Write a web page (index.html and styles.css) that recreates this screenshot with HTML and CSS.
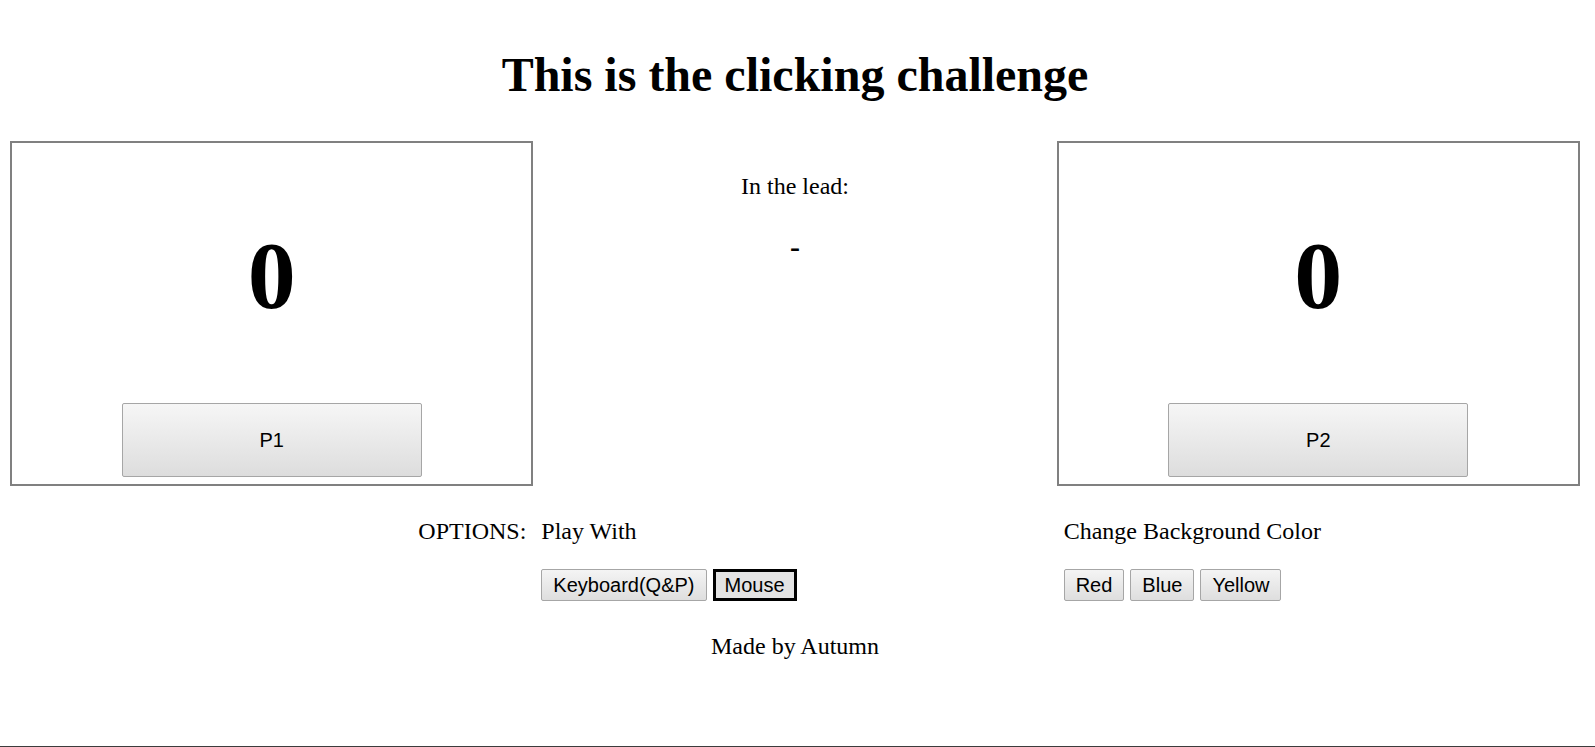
FILE: index.html
```html
<!DOCTYPE html>
<html lang="en">
<head>
<meta charset="utf-8">
<title>Clicking challenge</title>
<link rel="stylesheet" href="styles.css">
</head>
<body>
  <h1 class="title">This is the clicking challenge</h1>
  <div class="board">
    <div class="player">
      <div class="score">0</div>
      <button class="player-btn">P1</button>
    </div>
    <div class="lead">
      <div class="lead-label">In the lead:</div>
      <div class="lead-value">-</div>
    </div>
    <div class="player">
      <div class="score">0</div>
      <button class="player-btn">P2</button>
    </div>
  </div>
  <div class="options">
    <div class="opt-label">OPTIONS:</div>
    <div class="opt-group">
      <div class="opt-title">Play With</div>
      <div class="btn-row">
        <button class="small-btn">Keyboard(Q&amp;P)</button>
        <button class="small-btn selected">Mouse</button>
      </div>
    </div>
    <div class="opt-group">
      <div class="opt-title">Change Background Color</div>
      <div class="btn-row">
        <button class="small-btn">Red</button>
        <button class="small-btn">Blue</button>
        <button class="small-btn">Yellow</button>
      </div>
    </div>
  </div>
  <p class="credit">Made by Autumn</p>
</body>
</html>
```
FILE: styles.css
```css
html, body {
  margin: 0;
  padding: 0;
}

body {
  box-sizing: border-box;
  min-height: 100vh;
  padding: 0 15px 0 10px;
  border-bottom: 1px solid #3c3c3c;
  font-family: "Liberation Serif", "Times New Roman", serif;
  font-size: 24px;
  color: #000;
  background: #fff;
}

.title {
  margin: 47px 0 38px;
  font-size: 48px;
  line-height: 56px;
  font-weight: bold;
  text-align: center;
}

.board {
  display: grid;
  grid-template-columns: repeat(3, 1fr);
  align-items: start;
}

.player {
  display: flex;
  flex-direction: column;
  align-items: center;
  border: 2px solid #808080;
  padding: 85px 0 7px;
}

.score {
  font-size: 96px;
  line-height: 96px;
  font-weight: bold;
  margin-bottom: 79px;
}

.player-btn {
  width: 300px;
  height: 74px;
  font-family: "Liberation Sans", Arial, sans-serif;
  font-size: 20px;
  color: #000;
  background: linear-gradient(#f6f6f6, #dddddd);
  border: 1px solid #a6a6a6;
  border-radius: 2px;
  padding: 0;
}

.lead {
  display: flex;
  flex-direction: column;
  align-items: center;
  padding-top: 31px;
}

.lead-label {
  line-height: 28px;
}

.lead-value {
  margin-top: 29px;
  font-size: 30px;
  line-height: 36px;
  font-weight: bold;
}

.options {
  display: grid;
  grid-template-columns: repeat(3, 1fr);
  margin-top: 31px;
  line-height: 28px;
}

.opt-label {
  text-align: right;
  padding-right: 7px;
}

.opt-group {
  padding-left: 8px;
}

.opt-group + .opt-group {
  padding-left: 7px;
}

.btn-row {
  display: flex;
  gap: 6px;
  margin-top: 24px;
}

.small-btn {
  height: 32px;
  padding: 0 11px;
  font-family: "Liberation Sans", Arial, sans-serif;
  font-size: 20px;
  color: #000;
  background: linear-gradient(#f4f4f4, #dedede);
  border: 1px solid #a6a6a6;
  border-radius: 2px;
}

.small-btn.selected {
  padding: 0 9px;
  border: 3px solid #000;
  border-radius: 0;
  background: #e3e3e3;
}

.credit {
  margin: 31px 0 0;
  line-height: 28px;
  text-align: center;
}
```
